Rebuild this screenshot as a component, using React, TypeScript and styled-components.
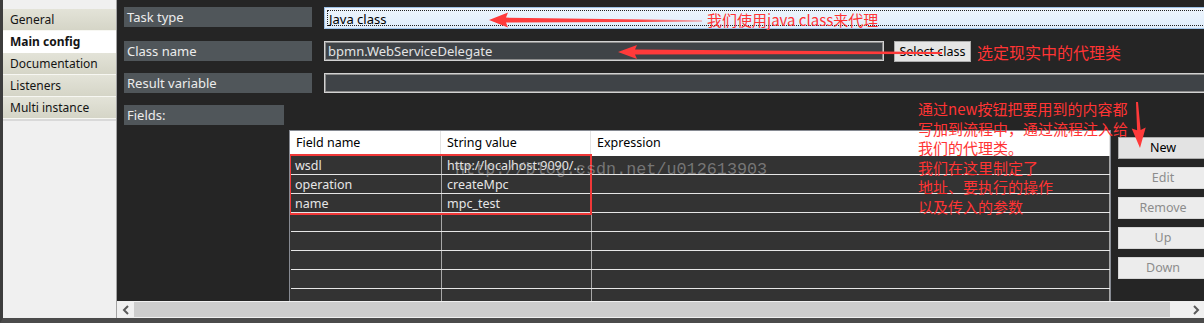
import React from 'react';
import styled, { createGlobalStyle } from 'styled-components';

const GlobalStyle = createGlobalStyle`
  html, body { margin: 0; padding: 0; background: #252525; }
  body { font-family: "Noto Sans", "Noto Sans CJK SC", sans-serif; }
  #root { width: 1204px; height: 323px; overflow: hidden; }
`;

const Frame = styled.div`
  position: relative;
  width: 1204px;
  height: 323px;
  box-sizing: border-box;
  border-left: 3px solid #3d3d3d;
  border-bottom: 5px solid #4b4b4b;
  background: #252525;
  display: grid;
  grid-template-columns: 114px 1fr;
  overflow: hidden;
`;

const Sidebar = styled.nav`
  background: #f0f0f0;
  border-right: 1px solid #a3a3a3;
  display: flex;
  flex-direction: column;
  padding-top: 9px;
`;

const Tab = styled.div<{ $active?: boolean }>`
  height: 21px;
  line-height: 21px;
  padding-left: 7px;
  font-size: 12px;
  color: #141414;
  border-bottom: 1px solid ${p => (p.$active ? '#ffffff' : '#f7f7f2')};
  background: ${p => (p.$active ? '#ffffff' : 'linear-gradient(#e3e3d8, #d5d5c7)')};
  font-weight: ${p => (p.$active ? 700 : 400)};
  white-space: nowrap;
`;

const SideFill = styled.div`
  flex: 1;
  border-top: 2px solid #d9d9d9;
`;

const Main = styled.main`
  display: grid;
  grid-template-rows: 1fr 17px;
  min-width: 0;
  overflow: hidden;
`;

const Content = styled.div`
  padding: 7px 0 0 7px;
  display: flex;
  flex-direction: column;
  overflow: hidden;
  min-height: 0;
`;

const FormRow = styled.div<{ $mt?: number }>`
  display: flex;
  align-items: flex-start;
  gap: 12px;
  margin-top: ${p => p.$mt ?? 0}px;
  flex-shrink: 0;
`;

const Label = styled.div<{ $w?: number }>`
  width: ${p => p.$w ?? 188}px;
  height: 20px;
  line-height: 20px;
  flex-shrink: 0;
  background: #50565a;
  color: #ececec;
  font-size: 13px;
  padding-left: 3px;
  box-sizing: border-box;
`;

const Combo = styled.div`
  width: 1000px;
  height: 22px;
  flex-shrink: 0;
  box-sizing: border-box;
  border: 1px solid #9fc3e7;
  background: linear-gradient(#eef5fd, #dfedfb);
  padding: 2px;
`;

const FocusBox = styled.div`
  height: 100%;
  box-sizing: border-box;
  border: 1px dotted #222;
  font-size: 13px;
  line-height: 16px;
  color: #000;
  padding-left: 1px;
`;

const TextInput = styled.div<{ $w: number }>`
  width: ${p => p.$w}px;
  height: 20px;
  flex-shrink: 0;
  box-sizing: border-box;
  border: 1px solid #d2d2d2;
  box-shadow: inset 0 0 0 1px #8c8c8c;
  background: #3f4347;
  color: #e4e4e4;
  font-size: 13px;
  line-height: 18px;
  padding-left: 3px;
`;

const SelectButton = styled.div`
  margin-left: -2px;
  width: 77px;
  height: 21px;
  flex-shrink: 0;
  box-sizing: border-box;
  border: 1px solid #adadad;
  background: #e5e5e5;
  color: #000;
  font-size: 12.5px;
  line-height: 19px;
  text-align: center;
`;

const TableArea = styled.div`
  margin-top: 5px;
  flex: 1;
  min-height: 0;
  display: flex;
  padding-left: 165px;
  gap: 7px;
`;

const Table = styled.div`
  position: relative;
  width: 822px;
  flex-shrink: 0;
  box-sizing: border-box;
  border: 1px solid #868a92;
  border-bottom: none;
  background: #333333;
  overflow: hidden;
`;

const HeaderRow = styled.div`
  display: grid;
  grid-template-columns: 151px 150px 1fr;
  height: 25px;
  background: #ffffff;
`;

const HeaderCell = styled.div`
  border-right: 1px solid #e4e4e4;
  color: #000;
  font-size: 12.5px;
  line-height: 24px;
  padding-left: 6px;
`;

const BodyRow = styled.div`
  display: grid;
  grid-template-columns: 151px 150px 1fr;
  height: 19px;
  box-sizing: border-box;
  border-bottom: 1px solid #e6e6e6;
  margin-left: 1px;
`;

const Cell = styled.div`
  border-right: 1px solid #a8a8a8;
  color: #e6e6e6;
  font-size: 12.5px;
  line-height: 19px;
  padding-left: 5px;
  white-space: nowrap;
  overflow: hidden;
  &:first-child { margin-left: -1px; }
`;

const RedBox = styled.div`
  position: absolute;
  left: -1px;
  top: 23px;
  width: 303px;
  height: 61px;
  box-sizing: border-box;
  border: 2px solid #f03838;
  pointer-events: none;
`;

const ButtonColumn = styled.div`
  display: flex;
  flex-direction: column;
  gap: 8px;
  padding-top: 7px;
`;

const SideButton = styled.div<{ $disabled?: boolean }>`
  width: 90px;
  height: 22px;
  box-sizing: border-box;
  border: 1px solid ${p => (p.$disabled ? '#d6d6d6' : '#adadad')};
  background: ${p => (p.$disabled ? '#ececec' : '#e3e3e3')};
  color: ${p => (p.$disabled ? '#8c8c8c' : '#000')};
  font-size: 12.5px;
  line-height: 20px;
  text-align: center;
`;

const ScrollBar = styled.div`
  display: flex;
  background: #f0f0f0;
`;

const ScrollBtn = styled.div`
  width: 17px;
  display: flex;
  align-items: center;
  justify-content: center;
  flex-shrink: 0;
`;

const Thumb = styled.div`
  width: 1036px;
  margin: 1px 0;
  background: #cdcdcd;
  flex-shrink: 0;
`;

const Track = styled.div`
  flex: 1;
`;

const Overlay = styled.svg`
  position: absolute;
  left: -3px;
  top: 0;
  pointer-events: none;
`;

const Note = styled.div<{ $x: number; $y: number; $size: number }>`
  position: absolute;
  left: ${p => p.$x - 3}px;
  top: ${p => p.$y}px;
  font-family: "Noto Sans CJK SC", "Noto Sans", sans-serif;
  font-size: ${p => p.$size}px;
  line-height: 19.5px;
  color: #ff3434;
  white-space: nowrap;
  pointer-events: none;
`;

const Watermark = styled.div`
  position: absolute;
  left: 452px;
  top: 160px;
  font-family: "Liberation Mono", monospace;
  font-size: 16.8px;
  color: rgba(185, 185, 185, 0.5);
  white-space: nowrap;
  pointer-events: none;
`;

type Pt = [number, number];

function arrowPoints(tip: Pt, tail: Pt, headLen: number, headHalf: number, w0: number, w1: number) {
  const dx = tail[0] - tip[0];
  const dy = tail[1] - tip[1];
  const len = Math.hypot(dx, dy);
  const ux = dx / len;
  const uy = dy / len;
  const nx = -uy;
  const ny = ux;
  const bx = tip[0] + ux * headLen;
  const by = tip[1] + uy * headLen;
  const pts: Pt[] = [
    tip,
    [bx + nx * headHalf + ux * 2, by + ny * headHalf + uy * 2],
    [bx + nx * (w0 / 2), by + ny * (w0 / 2)],
    [tail[0] + nx * (w1 / 2), tail[1] + ny * (w1 / 2)],
    [tail[0] - nx * (w1 / 2), tail[1] - ny * (w1 / 2)],
    [bx - nx * (w0 / 2), by - ny * (w0 / 2)],
    [bx - nx * headHalf + ux * 2, by - ny * headHalf + uy * 2],
  ];
  return pts.map(p => `${p[0].toFixed(1)},${p[1].toFixed(1)}`).join(' ');
}

const ChevronLeft = () => (
  <svg width="8" height="10" viewBox="0 0 8 10">
    <polyline points="6,1 2,5 6,9" fill="none" stroke="#5a5a5a" strokeWidth="2" />
  </svg>
);

const ChevronRight = () => (
  <svg width="8" height="10" viewBox="0 0 8 10">
    <polyline points="2,1 6,5 2,9" fill="none" stroke="#5a5a5a" strokeWidth="2" />
  </svg>
);

const rows: [string, string][] = [
  ['wsdl', 'http://localhost:9090/...'],
  ['operation', 'createMpc'],
  ['name', 'mpc_test'],
  ['', ''],
  ['', ''],
  ['', ''],
  ['', ''],
  ['', ''],
];

export default function App() {
  return (
    <>
      <GlobalStyle />
      <Frame>
        <Sidebar>
          <Tab>General</Tab>
          <Tab $active>Main config</Tab>
          <Tab>Documentation</Tab>
          <Tab>Listeners</Tab>
          <Tab>Multi instance</Tab>
          <SideFill />
        </Sidebar>
        <Main>
          <Content>
            <FormRow>
              <Label>Task type</Label>
              <Combo>
                <FocusBox>Java class</FocusBox>
              </Combo>
            </FormRow>
            <FormRow $mt={12}>
              <Label>Class name</Label>
              <TextInput $w={560}>bpmn.WebServiceDelegate</TextInput>
              <SelectButton>Select class</SelectButton>
            </FormRow>
            <FormRow $mt={11}>
              <Label>Result variable</Label>
              <TextInput $w={1000} />
            </FormRow>
            <FormRow $mt={12}>
              <Label $w={160}>Fields:</Label>
            </FormRow>
            <TableArea>
              <Table>
                <HeaderRow>
                  <HeaderCell>Field name</HeaderCell>
                  <HeaderCell>String value</HeaderCell>
                  <HeaderCell>Expression</HeaderCell>
                </HeaderRow>
                {rows.map((r, i) => (
                  <BodyRow key={i}>
                    <Cell>{r[0]}</Cell>
                    <Cell>{r[1]}</Cell>
                    <Cell />
                  </BodyRow>
                ))}
                <RedBox />
              </Table>
              <ButtonColumn>
                <SideButton>New</SideButton>
                <SideButton $disabled>Edit</SideButton>
                <SideButton $disabled>Remove</SideButton>
                <SideButton $disabled>Up</SideButton>
                <SideButton $disabled>Down</SideButton>
              </ButtonColumn>
            </TableArea>
          </Content>
          <ScrollBar>
            <ScrollBtn><ChevronLeft /></ScrollBtn>
            <Thumb />
            <Track />
            <ScrollBtn><ChevronRight /></ScrollBtn>
          </ScrollBar>
        </Main>

        <Watermark>http://blog.csdn.net/u012613903</Watermark>

        <Note $x={707} $y={10} $size={15}>我们使用java class来代理</Note>
        <Note $x={977} $y={43} $size={16}>选定现实中的代理类</Note>
        <Note $x={918} $y={99} $size={15}>
          通过new按钮把要用到的内容都
          <br />
          写加到流程中，通过流程注入给
          <br />
          我们的代理类。
          <br />
          我们在这里制定了
          <br />
          地址、要执行的操作
          <br />
          以及传入的参数
        </Note>

        <Overlay width="1204" height="323" viewBox="0 0 1204 323">
          <defs>
            <linearGradient id="fade1" x1="489" y1="0" x2="702" y2="0" gradientUnits="userSpaceOnUse">
              <stop offset="0" stopColor="#ff3a3a" stopOpacity="1" />
              <stop offset="0.7" stopColor="#ff3a3a" stopOpacity="0.95" />
              <stop offset="1" stopColor="#ff3a3a" stopOpacity="0.35" />
            </linearGradient>
          </defs>
          <polygon points={arrowPoints([489, 20], [702, 21], 17, 7.5, 5, 1.5)} fill="url(#fade1)" />
          <polygon points={arrowPoints([618, 52], [942, 53], 17, 7, 5, 2)} fill="#ff3a3a" />
          <polygon points={arrowPoints([1140, 148], [1137, 102], 18, 7, 3.5, 2)} fill="#ff3a3a" />
        </Overlay>
      </Frame>
    </>
  );
}
